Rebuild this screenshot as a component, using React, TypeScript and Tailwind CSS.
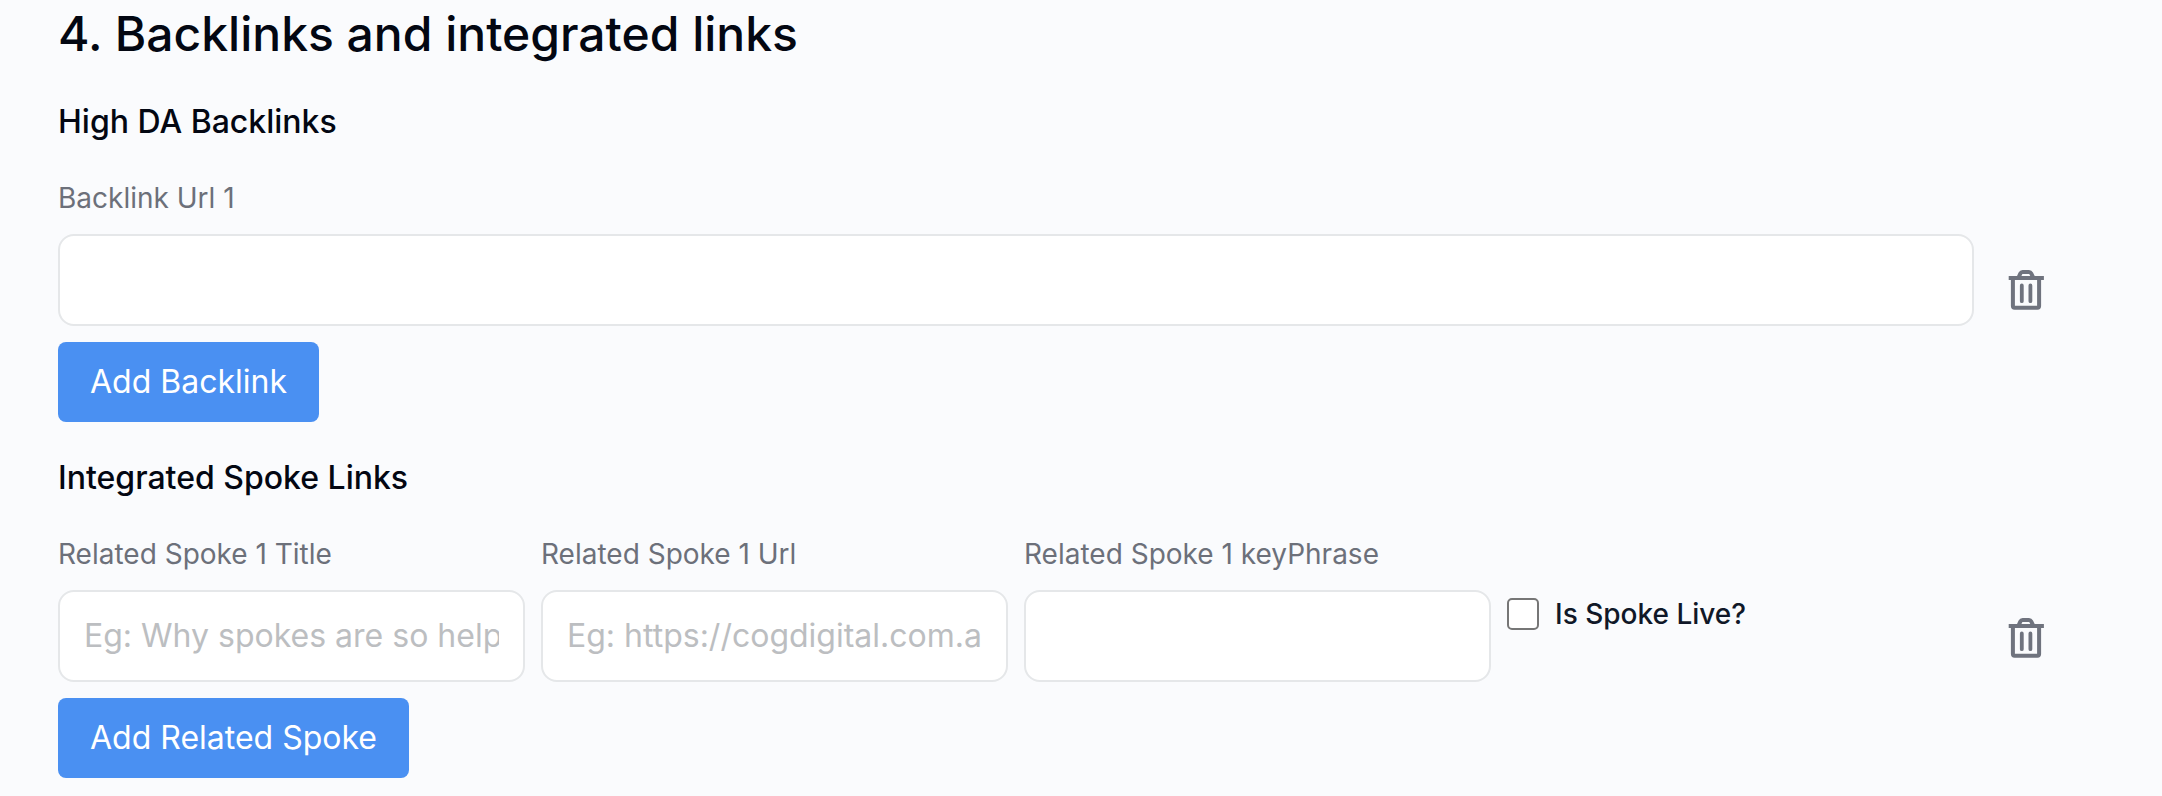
import type { ReactNode } from "react";

function TrashIcon() {
  return (
    <svg width="37" height="42" viewBox="0 0 37 42" fill="none" stroke="currentColor" strokeWidth="4" strokeLinejoin="round">
      <path d="M0.7 9H35.9" />
      <path d="M10.4 8.8L12.4 4.4Q13.1 3 14.6 3H21Q22.5 3 23.2 4.4L25.4 8.8" />
      <path d="M4.9 9V37Q4.9 38.7 6.6 38.7H29.4Q31.1 38.7 31.1 37V9" />
      <path d="M13.8 16.4V32.2M22.4 16.4V32.2" strokeWidth="3.8" strokeLinecap="round" />
    </svg>
  );
}

function SectionTitle({ children }: { children: ReactNode }) {
  return <h2 className="text-[32px] leading-[48px] font-medium text-[#030712]">{children}</h2>;
}

function Field({ label, placeholder, className }: { label: string; placeholder?: string; className: string }) {
  return (
    <label className={`flex flex-col ${className}`}>
      <span className="mb-4 text-[28px] leading-10 text-[#6c707a]">{label}</span>
      <input
        type="text"
        placeholder={placeholder}
        className="h-[92px] w-full rounded-2xl border-2 border-[#e5e7e9] bg-white px-6 pb-0.5 text-[32px] text-gray-900 placeholder:text-[#bcbec1]"
      />
    </label>
  );
}

function AddButton({ children }: { children: ReactNode }) {
  return (
    <button type="button" className="mt-4 h-20 self-start rounded-lg bg-[#4a90f2] px-8 text-[32px] leading-[48px] text-white">
      {children}
    </button>
  );
}

export default function App() {
  return (
    <main className="flex h-[796px] w-full flex-col overflow-hidden bg-[#fafbfd] pl-[58px] font-['Inter',sans-serif]">
      <h1 className="text-[48px] leading-[68px] font-medium text-[#030712]">4. Backlinks and integrated links</h1>

      <section className="mt-[30px] flex flex-col">
        <SectionTitle>High DA Backlinks</SectionTitle>
        <div className="mt-8 flex">
          <Field label="Backlink Url 1" className="w-[1916px]" />
          <button type="button" aria-label="Delete backlink" className="mt-[91px] ml-[34px] self-start text-[#6f737e]">
            <TrashIcon />
          </button>
        </div>
        <AddButton>Add Backlink</AddButton>
      </section>

      <section className="mt-8 flex flex-col">
        <SectionTitle>Integrated Spoke Links</SectionTitle>
        <div className="mt-8 flex gap-4">
          <Field label="Related Spoke 1 Title" placeholder="Eg: Why spokes are so helpful" className="w-[467px]" />
          <Field label="Related Spoke 1 Url" placeholder="Eg: https://cogdigital.com.au" className="w-[467px]" />
          <Field label="Related Spoke 1 keyPhrase" className="w-[467px]" />
          <label className="mt-16 flex h-8 w-[485px] items-center gap-4">
            <input type="checkbox" className="size-8 appearance-none rounded-[5px] border-2 border-[#767676] bg-white" />
            <span className="text-[28px] leading-10 font-medium text-gray-900">Is Spoke Live?</span>
          </label>
          <button type="button" aria-label="Delete related spoke" className="mt-[83px] self-start text-[#6f737e]">
            <TrashIcon />
          </button>
        </div>
        <AddButton>Add Related Spoke</AddButton>
      </section>
    </main>
  );
}
